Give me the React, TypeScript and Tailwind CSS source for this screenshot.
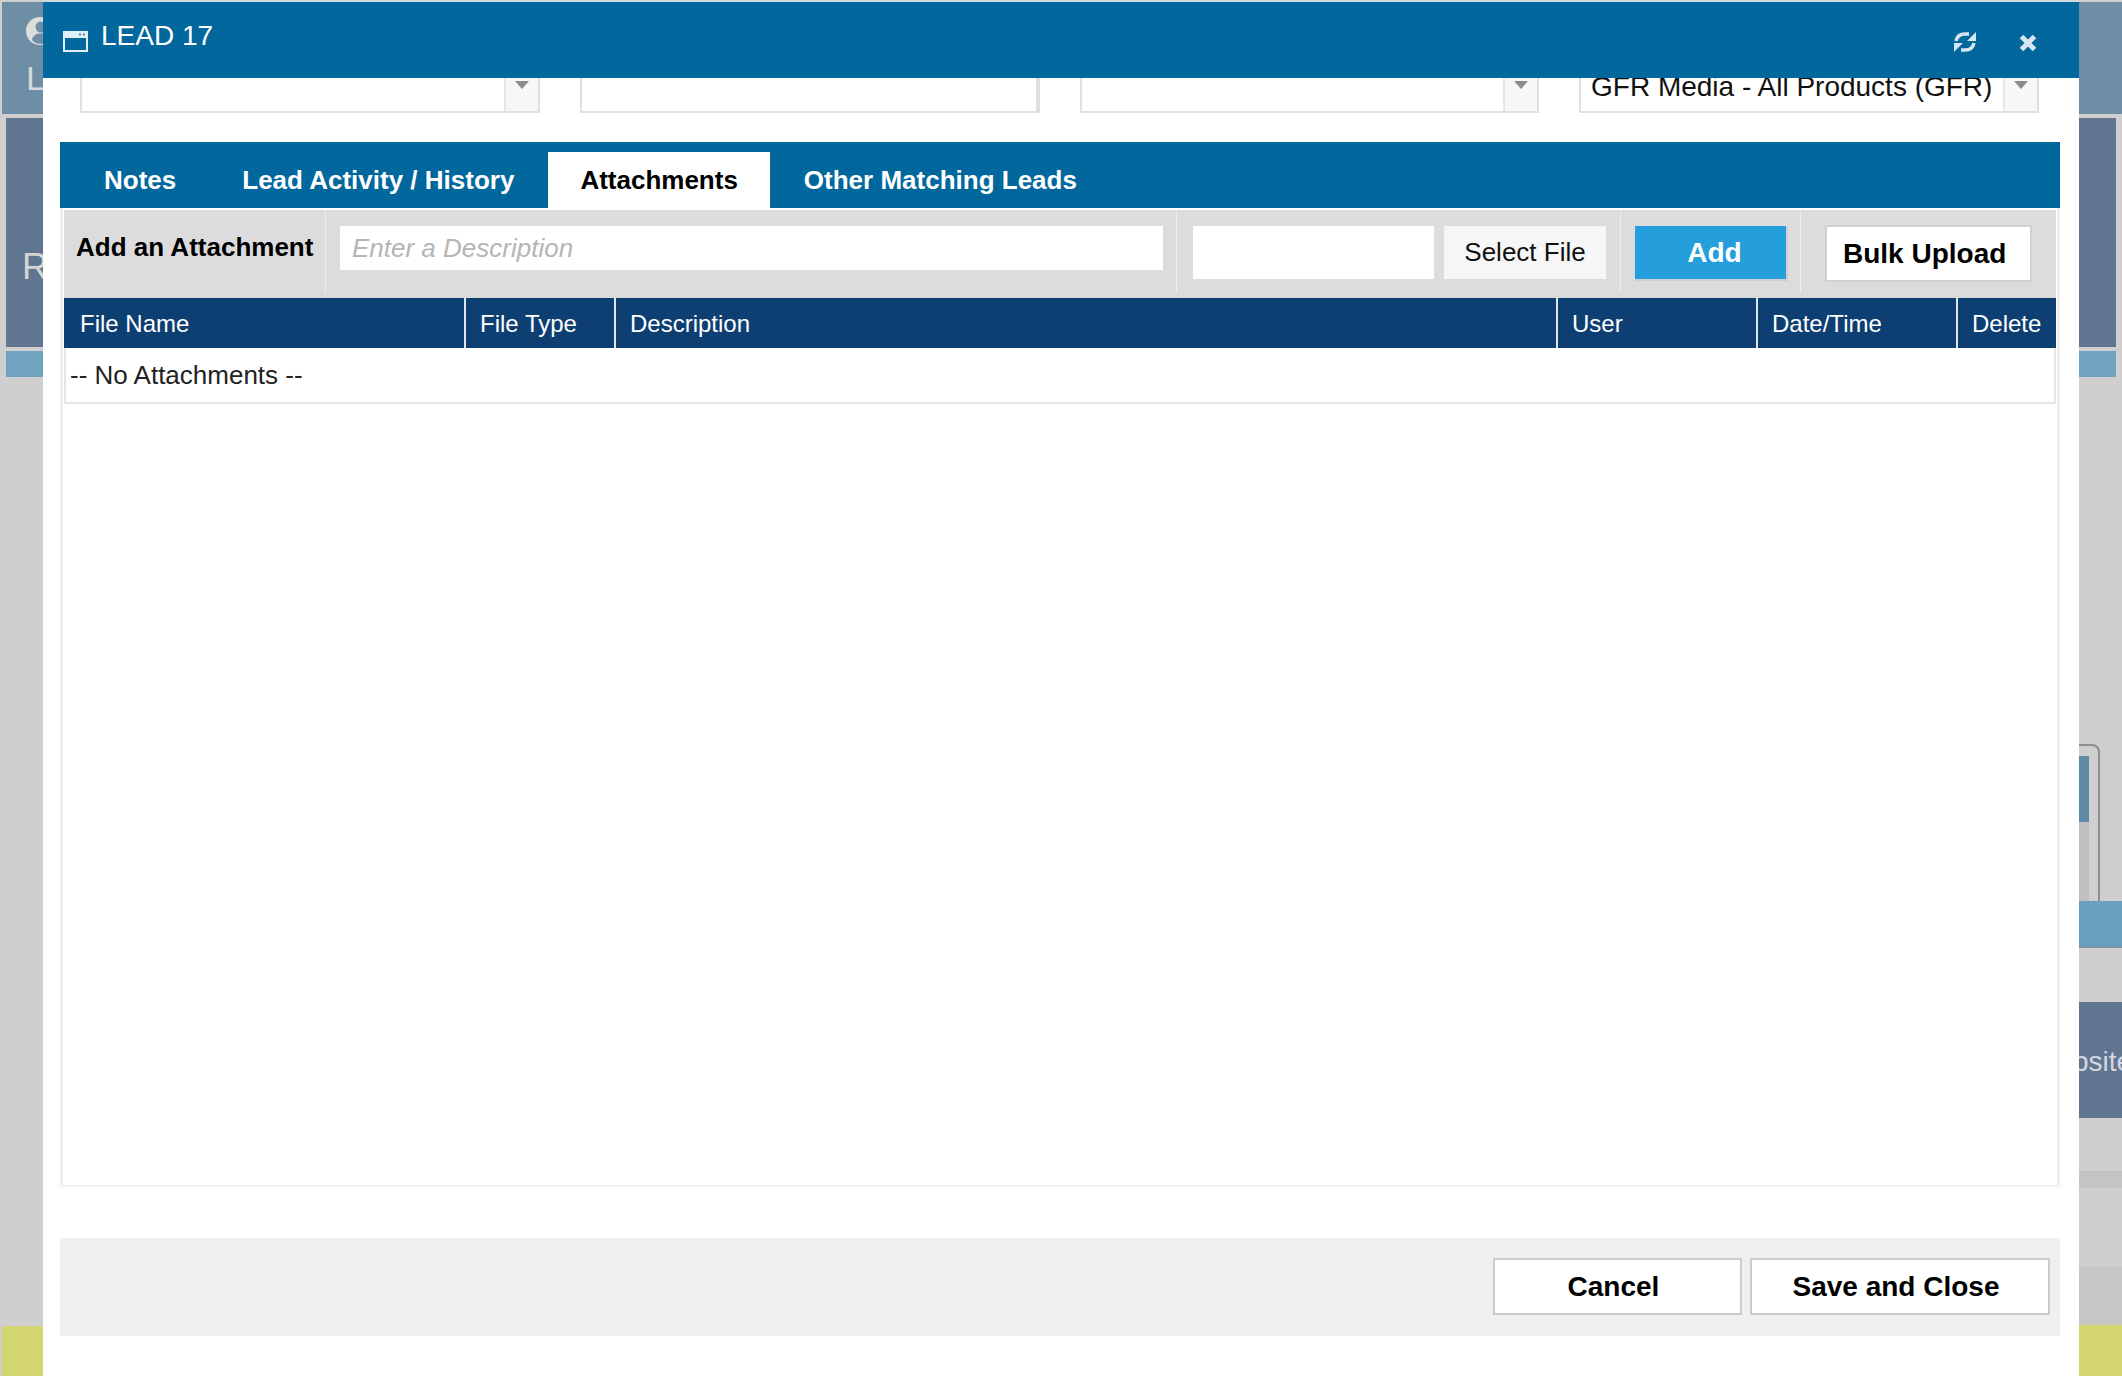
const FONT = "font-['Liberation_Sans',Arial,sans-serif]";

const columns = [
  { label: 'File Name', width: 'w-[402px] pl-[16px]' },
  { label: 'File Type', width: 'w-[150px] pl-[14px]' },
  { label: 'Description', width: 'w-[942px] pl-[14px]' },
  { label: 'User', width: 'w-[200px] pl-[14px]' },
  { label: 'Date/Time', width: 'w-[200px] pl-[14px]' },
  { label: 'Delete', width: 'flex-1 pl-[14px]' },
];

const tabs = ['Notes', 'Lead Activity / History', 'Attachments', 'Other Matching Leads'];

const WindowIcon = () => (
  <svg width="25" height="21" viewBox="0 0 25 21" className="shrink-0">
    <rect x="1" y="1" width="23" height="19" fill="none" stroke="#dff0f8" strokeWidth="2" />
    <rect x="1" y="1" width="23" height="6" fill="#dff0f8" />
    <rect x="16" y="2.5" width="2" height="2" fill="#5f8fb0" />
    <rect x="20" y="2.5" width="2" height="2" fill="#5f8fb0" />
  </svg>
);

const RefreshIcon = () => (
  <svg width="24" height="22" viewBox="0 0 24 22" className="shrink-0 text-[#d5e6f0]">
    <path d="M3 10 C4 5 8 3 12 3 L16 3" fill="none" stroke="currentColor" strokeWidth="3.5" />
    <path d="M23 1 V10 H14 Z" fill="currentColor" />
    <path d="M21 12 C20 17 16 19 12 19 L8 19" fill="none" stroke="currentColor" strokeWidth="3.5" />
    <path d="M1 21 V12 H10 Z" fill="currentColor" />
  </svg>
);

const CloseIcon = () => (
  <svg width="18" height="18" viewBox="0 0 18 18" className="shrink-0 text-[#d5e6f0]">
    <path d="M2.5 2.5 L15.5 15.5 M15.5 2.5 L2.5 15.5" fill="none" stroke="currentColor" strokeWidth="5" />
  </svg>
);

const UserCircleIcon = () => (
  <svg width="28" height="28" viewBox="0 0 28 28" className="shrink-0">
    <circle cx="14" cy="14" r="14" fill="#dcdcdc" />
    <circle cx="15" cy="10" r="5.5" fill="#6e8ea6" />
    <path d="M6 23 C7 18 10 16.5 15 16.5 C20 16.5 23 18 24 23 C21 26 18 27 15 27 C11 27 8 25.5 6 23 Z" fill="#6e8ea6" />
  </svg>
);

const SelectField = ({ value, width }: { value?: string; width: string }) => (
  <div className={`${width} h-[60px] -mt-[25px] flex border-[2px] border-[#e0e0e0] bg-white`}>
    <div className="flex-1 pl-[10px] pt-[2px] text-[28px] leading-[60px] text-[#111] whitespace-nowrap overflow-hidden">
      {value}
    </div>
    <div className="w-[34px] border-l-[2px] border-[#e6e6e6] bg-[#f7f7f7] flex justify-center pt-[26px]">
      <div className="w-0 h-0 border-x-[7px] border-x-transparent border-t-[8px] border-t-[#8c8c8c]" />
    </div>
  </div>
);

const SideLeft = () => (
  <div className="w-[43px] shrink-0 bg-[#cfcfcf] flex flex-col overflow-hidden">
    <div className="h-[112px] mt-[2px] ml-[2px] bg-[#6e8ea6] pl-[24px] pt-[15px] text-[34px] text-[#d9d9d9]">
      <UserCircleIcon />
      <div className="mt-[14px] leading-[38px]">L</div>
    </div>
    <div className="h-[229px] mt-[4px] ml-[6px] bg-[#5f7590] pl-[16px] pt-[127px] text-[36px] text-[#d5d5d5] leading-[44px]">
      R
    </div>
    <div className="h-[26px] mt-[4px] ml-[6px] bg-[#6fa3c0]" />
    <div className="flex-1" />
    <div className="h-[50px] ml-[2px] bg-[#d2d570]" />
  </div>
);

const SideRight = () => (
  <div className="flex-1 bg-[#cfcfcf] flex flex-col overflow-hidden">
    <div className="h-[112px] mt-[2px] bg-[#6e8ea6]" />
    <div className="h-[229px] mt-[4px] mr-[6px] bg-[#5f7590]" />
    <div className="h-[26px] mt-[4px] mr-[6px] bg-[#6fa3c0]" />
    <div className="h-[367px]" />
    <div className="h-[157px] w-[21px] flex flex-col border-t-[2px] border-r-[2px] border-[#8e8e8e] rounded-tr-[8px] pt-[10px] pr-[9px] pb-0">
      <div className="h-[66px] bg-[#5f8aa5]" />
      <div className="flex-1 bg-[#c0c0c0]" />
    </div>
    <div className="h-[47px] bg-[#6a9fbf] border-b-[1px] border-[#8e8e8e]" />
    <div className="h-[54px]" />
    <div className="h-[116px] bg-[#5f7590] text-[28px] text-[#d5d5e0] leading-[120px] whitespace-nowrap">
      <span className="-ml-[6px] block">bsite</span>
    </div>
    <div className="h-[53px]" />
    <div className="h-[17px] bg-[#c4c4c4]" />
    <div className="h-[79px]" />
    <div className="h-[58px] bg-[#c6c6c6]" />
    <div className="flex-1 bg-[#d2d570]" />
  </div>
);

export default function App() {
  return (
    <div className={`${FONT} w-[2122px] h-[1376px] flex overflow-hidden`}>
      <SideLeft />

      {/* Lead dialog */}
      <div className="w-[2036px] shrink-0 bg-white flex flex-col">
        <div className="h-[2px] bg-[#cfd8dd]" />
        <div className="h-[76px] bg-[#02679d] flex items-start text-white">
          <div className="ml-[20px] mt-[29px]">
            <WindowIcon />
          </div>
          <div className="ml-[13px] mt-[17px] text-[28px] leading-[34px]">LEAD 17</div>
          <div className="flex-1" />
          <div className="mt-[29px]">
            <RefreshIcon />
          </div>
          <div className="ml-[42px] mt-[32px] mr-[42px]">
            <CloseIcon />
          </div>
        </div>

        {/* Fields scrolled under the header */}
        <div className="h-[35px] overflow-hidden flex pl-[37px] gap-[40px]">
          <SelectField width="w-[460px]" />
          <div className="w-[460px] h-[60px] -mt-[25px] border-[2px] border-r-[4px] border-[#e0e0e0] bg-white" />
          <SelectField width="w-[459px]" />
          <SelectField width="w-[460px]" value="GFR Media - All Products (GFR)" />
        </div>

        <div className="ml-[17px] mr-[19px] mt-[29px] flex-1 flex flex-col">
          {/* Tabs */}
          <div className="h-[66px] bg-[#02679d] flex items-end pl-[12px] gap-[2px] text-[26px] font-bold">
            {tabs.map((tab) => (
              <div
                key={tab}
                className={
                  tab === 'Attachments'
                    ? 'h-[56px] px-[32px] bg-white text-black leading-[56px]'
                    : 'h-[56px] px-[32px] text-white leading-[56px]'
                }
              >
                {tab}
              </div>
            ))}
          </div>

          <div className="h-[979px] border-x-[3px] border-b-[2px] border-[#f0f0f0] px-px pt-[2px]">
            {/* Add attachment toolbar */}
            <div className="h-[88px] bg-[#dcdcde] flex text-[26px] pb-[5px]">
              <div className="w-[262px] border-r-[1px] border-[#eeeeee] pl-[12px] pt-[17px] font-bold text-black leading-[40px]">
                Add an Attachment
              </div>
              <div className="w-[851px] border-r-[1px] border-[#eeeeee] pl-[14px] pr-[13px] pt-[16px]">
                <div className="h-[44px] bg-white pl-[12px] italic text-[#b5b5b5] leading-[44px]">
                  Enter a Description
                </div>
              </div>
              <div className="w-[444px] border-r-[1px] border-[#eeeeee] pl-[16px] pt-[16px] flex gap-[10px]">
                <div className="w-[241px] h-[53px] bg-white" />
                <div className="w-[162px] h-[53px] bg-[#f6f6f6] text-center text-[#111] leading-[53px]">
                  Select File
                </div>
              </div>
              <div className="w-[180px] border-r-[1px] border-[#eeeeee] pl-[14px] pt-[16px]">
                <div className="w-[153px] h-[55px] bg-[#259fdc] border-r-[2px] border-b-[2px] border-[#cfcfcf] pl-[8px] text-center text-[28px] font-bold text-white leading-[54px]">
                  Add
                </div>
              </div>
              <div className="flex-1 pl-[24px] pt-[15px]">
                <div className="w-[207px] h-[57px] bg-white border-[2px] border-[#cfcfcf] pl-[16px] text-[28px] font-bold text-black leading-[54px]">
                  Bulk Upload
                </div>
              </div>
            </div>

            {/* Attachments table */}
            <div className="h-[50px] bg-[#0d3f73] flex text-[24px] text-white leading-[51px]">
              {columns.map((col, i) => (
                <div
                  key={col.label}
                  className={`${col.width} ${i < 5 ? 'border-r-[2px] border-[#dfe6ee]' : ''}`}
                >
                  {col.label}
                </div>
              ))}
            </div>
            <div className="h-[56px] border-x-[2px] border-b-[2px] border-[#e6e6e6] pl-[4px] text-[26px] text-[#222] leading-[55px]">
              -- No Attachments --
            </div>
          </div>

          {/* Footer actions */}
          <div className="mt-[51px] h-[98px] bg-[#f0f0f0] flex justify-end gap-[8px] pt-[20px] pr-[10px] text-[28px] font-bold text-black">
            <div className="w-[249px] h-[57px] bg-white border-[2px] border-[#cccccc] text-center leading-[53px] pr-[8px]">
              Cancel
            </div>
            <div className="w-[300px] h-[57px] bg-white border-[2px] border-[#cccccc] text-center leading-[53px] pr-[8px]">
              Save and Close
            </div>
          </div>
          <div className="h-[40px]" />
        </div>
      </div>

      <SideRight />
    </div>
  );
}
